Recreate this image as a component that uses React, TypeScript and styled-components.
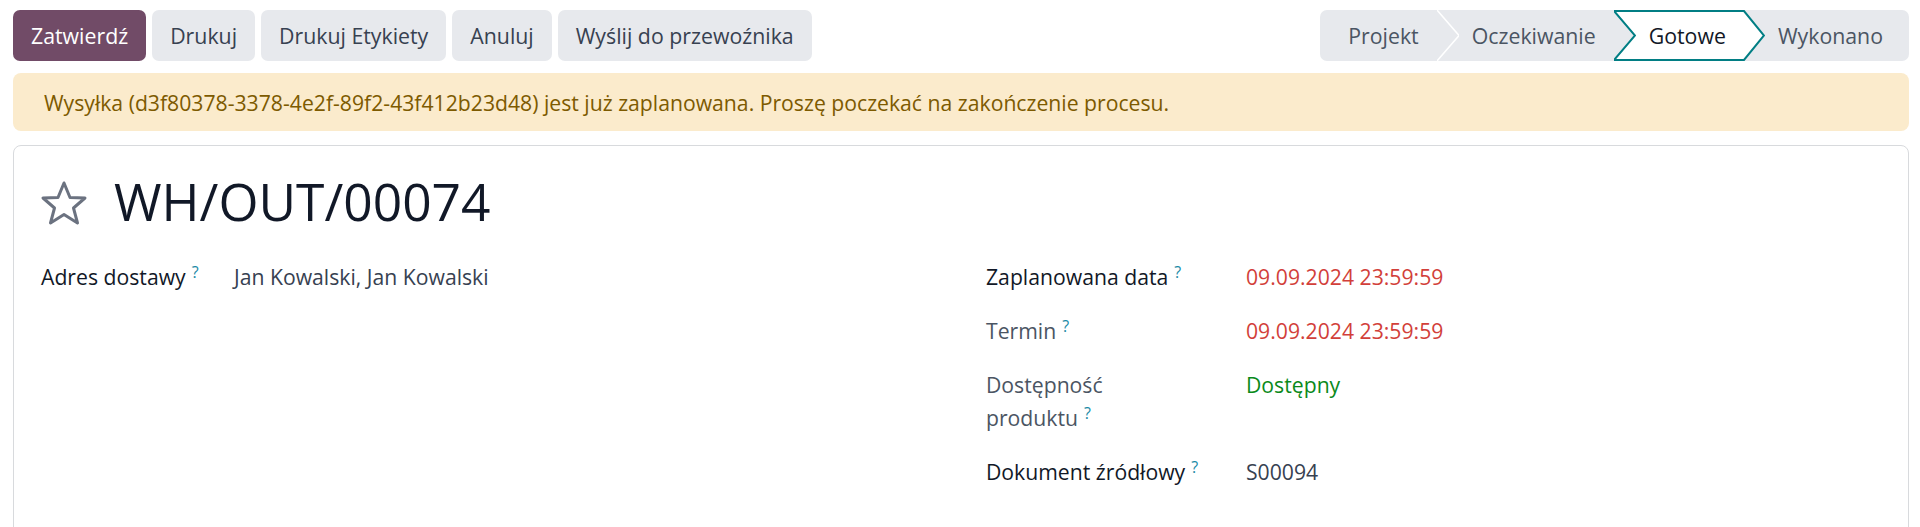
import React from "react";
import styled, { createGlobalStyle } from "styled-components";

const GlobalStyle = createGlobalStyle`
  html, body {
    margin: 0;
    padding: 0;
    background: #ffffff;
    font-family: "Open Sans", "Noto Sans", sans-serif;
    color: #374151;
  }
`;

const Page = styled.div`
  padding: 10px 11px 0 13px;
`;

const ControlPanel = styled.div`
  display: flex;
  justify-content: space-between;
  align-items: center;
`;

const Buttons = styled.div`
  display: flex;
  gap: 6px;
`;

const Button = styled.button<{ $primary?: boolean }>`
  height: 51px;
  padding: 0 18px;
  border: none;
  border-radius: 7px;
  font-family: inherit;
  font-size: 21.3px;
  background: ${(p) => (p.$primary ? "#714b67" : "#e7e9ed")};
  color: ${(p) => (p.$primary ? "#ffffff" : "#374151")};
`;

const StatusBar = styled.div`
  display: flex;
  height: 51px;
  background: #e7e9ed;
  border-radius: 7px;
`;

const Step = styled.div<{ $first?: boolean; $last?: boolean }>`
  display: flex;
  align-items: center;
  padding-left: ${(p) => (p.$first ? 28 : 13)}px;
  padding-right: ${(p) => (p.$last ? 26 : 18)}px;
  font-size: 21.3px;
  color: #4b5563;
`;

const ActiveBody = styled.div`
  display: flex;
  align-items: center;
  padding: 0 17px 0 13px;
  background: #ffffff;
  border-top: 2px solid #017e84;
  border-bottom: 2px solid #017e84;
  font-size: 21.3px;
  color: #111827;
`;

const Arrow = styled.svg`
  flex: 0 0 22px;
  width: 22px;
  height: 51px;
  display: block;
`;

const Alert = styled.div`
  margin-top: 12px;
  height: 58px;
  display: flex;
  align-items: center;
  padding: 0 31px;
  background: #fbebcc;
  border-radius: 8px;
  color: #7d5a00;
  font-size: 21.2px;
`;

const Sheet = styled.div`
  margin-top: 14px;
  min-height: 400px;
  border: 1px solid #d8dadd;
  border-radius: 8px;
  padding: 31px 26px 0 26px;
`;

const TitleRow = styled.div`
  display: flex;
  align-items: center;
  gap: 26px;
  height: 52px;
`;

const Title = styled.h1`
  margin: 0 0 3px 0;
  font-size: 51.5px;
  font-weight: 400;
  color: #111827;
  line-height: 1;
`;

const Groups = styled.div`
  display: grid;
  grid-template-columns: 1fr 1fr;
  margin-top: 31px;
`;

const Group = styled.div<{ $label: number; $indent?: number }>`
  display: grid;
  grid-template-columns: ${(p) => p.$label}px 1fr;
  row-gap: 21px;
  align-content: start;
  padding-left: ${(p) => p.$indent || 0}px;
`;

const Label = styled.div<{ $strong?: boolean }>`
  font-size: 21.2px;
  line-height: 33px;
  color: ${(p) => (p.$strong ? "#111827" : "#4b5563")};
  padding-right: 20px;
`;

const Help = styled.sup`
  font-size: 16px;
  font-weight: 500;
  color: #1a8aa6;
  margin-left: 6px;
  vertical-align: 7px;
  line-height: 0;
`;

const Value = styled.div<{ $tone?: "danger" | "dangerBold" | "success" }>`
  font-size: 21.2px;
  line-height: 33px;
  color: ${(p) =>
    p.$tone === "danger" || p.$tone === "dangerBold"
      ? "#d23f3a"
      : p.$tone === "success"
      ? "#0a8a1a"
      : "#374151"};
  font-weight: ${(p) => (p.$tone === "dangerBold" ? 500 : 400)};
`;

const Chevron = () => (
  <Arrow viewBox="0 0 22 51">
    <polyline points="0,0 22,25.5 0,51" fill="none" stroke="#ffffff" strokeWidth="1.5" />
  </Arrow>
);

const Notch = () => (
  <Arrow viewBox="0 0 22 51">
    <polygon points="0,0 22,0 22,51 0,51 22,25.5" fill="#ffffff" />
    <polyline points="22,1 0,1 21,25.5 0,50 22,50" fill="none" stroke="#017e84" strokeWidth="2" />
  </Arrow>
);

const Tip = () => (
  <Arrow viewBox="0 0 22 51">
    <polygon points="0,0 22,25.5 0,51" fill="#ffffff" />
    <polyline points="0,1 1,1 21,25.5 1,50 0,50" fill="none" stroke="#017e84" strokeWidth="2" />
  </Arrow>
);

const Star = () => (
  <svg width="48" height="46" viewBox="0 0 48 46">
    <polygon
      points="24,3 30,17.5 45,18 33.5,28 37.5,43 24,34.5 10.5,43 14.5,28 3,18 18,17.5"
      fill="none"
      stroke="#6b7280"
      strokeWidth="3"
      strokeLinejoin="round"
    />
  </svg>
);

export default function App() {
  return (
    <Page>
      <GlobalStyle />
      <ControlPanel>
        <Buttons>
          <Button $primary>Zatwierdź</Button>
          <Button>Drukuj</Button>
          <Button>Drukuj Etykiety</Button>
          <Button>Anuluj</Button>
          <Button>Wyślij do przewoźnika</Button>
        </Buttons>
        <StatusBar>
          <Step $first>Projekt</Step>
          <Chevron />
          <Step>Oczekiwanie</Step>
          <Notch />
          <ActiveBody>Gotowe</ActiveBody>
          <Tip />
          <Step $last>Wykonano</Step>
        </StatusBar>
      </ControlPanel>
      <Alert>
        Wysyłka (d3f80378-3378-4e2f-89f2-43f412b23d48) jest już zaplanowana. Proszę poczekać na zakończenie procesu.
      </Alert>
      <Sheet>
        <TitleRow>
          <Star />
          <Title>WH/OUT/00074</Title>
        </TitleRow>
        <Groups>
          <Group $label={193} $indent={1}>
            <Label $strong>
              Adres dostawy<Help>?</Help>
            </Label>
            <Value>Jan Kowalski, Jan Kowalski</Value>
          </Group>
          <Group $label={260} $indent={25}>
            <Label $strong>
              Zaplanowana data<Help>?</Help>
            </Label>
            <Value $tone="danger">09.09.2024 23:59:59</Value>
            <Label>
              Termin<Help>?</Help>
            </Label>
            <Value $tone="dangerBold">09.09.2024 23:59:59</Value>
            <Label>
              Dostępność
              <br />
              produktu<Help>?</Help>
            </Label>
            <Value $tone="success">Dostępny</Value>
            <Label $strong>
              Dokument źródłowy<Help>?</Help>
            </Label>
            <Value>S00094</Value>
          </Group>
        </Groups>
      </Sheet>
    </Page>
  );
}
